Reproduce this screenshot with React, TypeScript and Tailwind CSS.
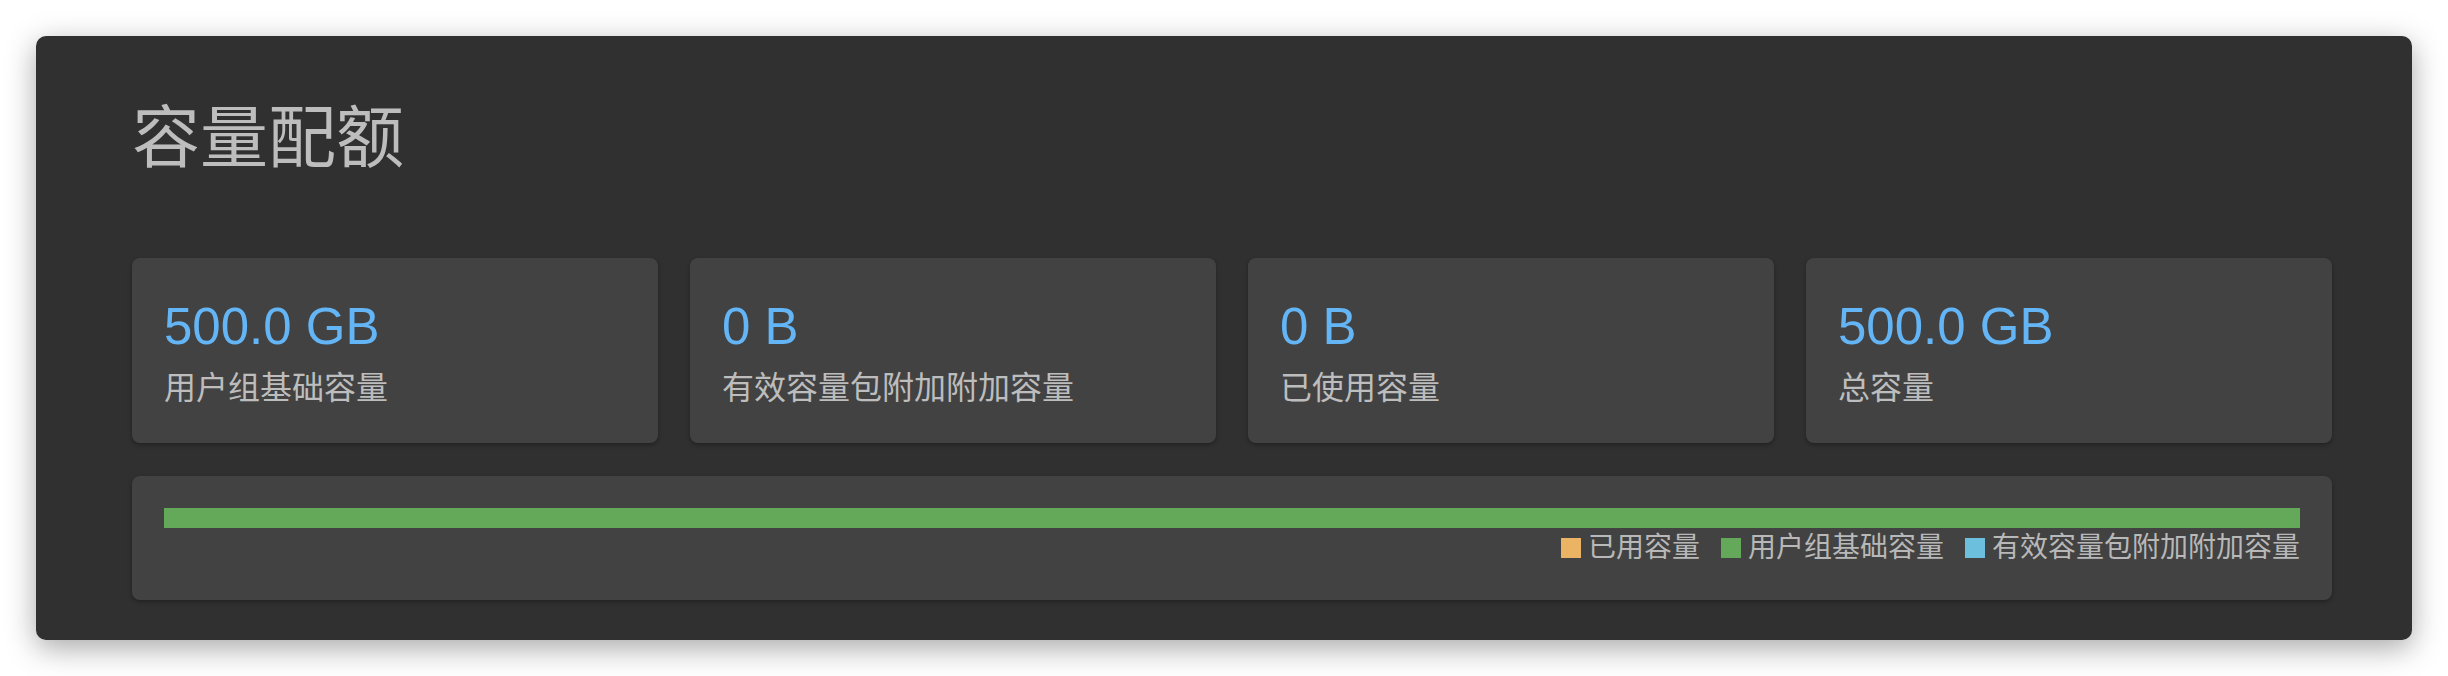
import React from "react";

const stats = [
  { value: "500.0 GB", label: "用户组基础容量" },
  { value: "0 B", label: "有效容量包附加附加容量" },
  { value: "0 B", label: "已使用容量" },
  { value: "500.0 GB", label: "总容量" },
];

export default function App() {
  return (
    <div className="w-[2448px] h-[676px] bg-white pt-[36px] pl-[36px] font-['Liberation_Sans','Noto_Sans_CJK_SC',sans-serif]">
      <div className="w-[2376px] h-[604px] bg-[#303030] rounded-[10px] shadow-[0_8px_30px_rgba(0,0,0,0.35)] pl-[96px] pr-[80px] pt-[62px]">
        <h1 className="text-[68px] leading-[80px] text-[#bdbdbd] font-normal">容量配额</h1>
        <div className="grid grid-cols-4 gap-[32px] mt-[80px]">
          {stats.map((s, i) => (
            <div
              key={i}
              className="bg-[#424242] rounded-[8px] shadow-[0_2px_4px_rgba(0,0,0,0.3)] pl-[32px] pr-[32px] pt-[32px] pb-[31px]"
            >
              <div className="text-[51px] leading-[74px] text-[#64b5f6]">{s.value}</div>
              <div className="text-[32px] leading-[48px] text-[#bdbdbd]">{s.label}</div>
            </div>
          ))}
        </div>
        <div className="mt-[33px] bg-[#424242] rounded-[8px] shadow-[0_2px_4px_rgba(0,0,0,0.3)] p-[32px]">
          <div className="h-[20px] bg-[#64a95a]" />
          <div className="flex justify-end items-center h-[40px] gap-[21px] text-[28px] leading-[40px] text-[#b8b8b8]">
            <div className="flex items-center">
              <span className="w-[20px] h-[20px] bg-[#eab464] mr-[7px]" />
              <span>已用容量</span>
            </div>
            <div className="flex items-center">
              <span className="w-[20px] h-[20px] bg-[#64a95a] mr-[7px]" />
              <span>用户组基础容量</span>
            </div>
            <div className="flex items-center">
              <span className="w-[20px] h-[20px] bg-[#6cbfdd] mr-[7px]" />
              <span>有效容量包附加附加容量</span>
            </div>
          </div>
        </div>
      </div>
    </div>
  );
}
